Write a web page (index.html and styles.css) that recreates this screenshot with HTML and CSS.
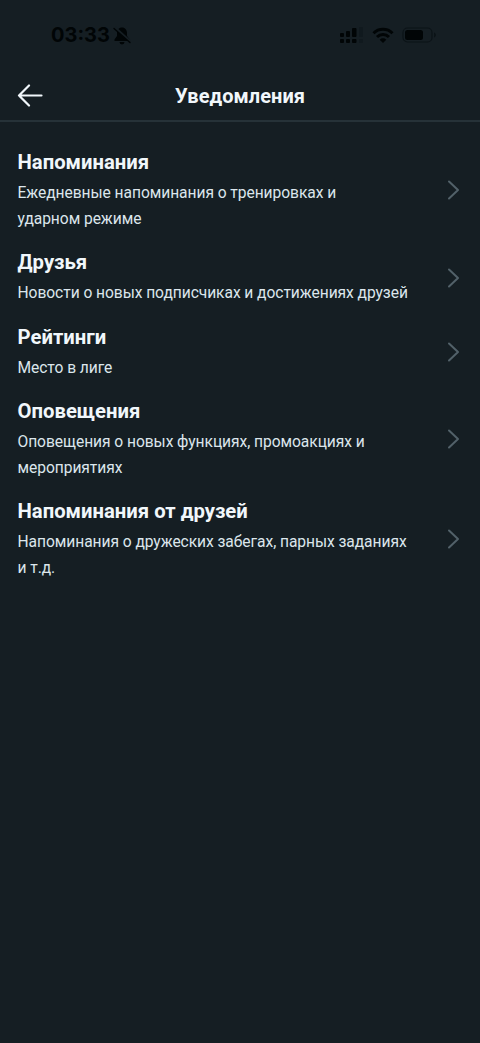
FILE: index.html
```html
<!DOCTYPE html>
<html lang="ru">
<head>
<meta charset="utf-8">
<title>Уведомления</title>
<link rel="stylesheet" href="styles.css">
</head>
<body>
<div class="status">
  <div class="clock">
    <span class="time">03:33</span>
    <svg width="18" height="19" viewBox="0 0 18 19"><path d="M9 1.500C5.800 1.500 4 4 4 7v3L1.500 13.500V15h15v-1.500L14 10V7c0-3-1.800-5.500-5-5.500zM6.500 16h5a2.500 2.500 0 0 1-5 0z" fill="#010506"/><path d="M1.800 1.500l15.500 14" stroke="#151e23" stroke-width="2.600"/><path d="M1 2.500l16 14" stroke="#010506" stroke-width="1.300" stroke-linecap="round"/></svg>
  </div>
  <div class="signals">
    <svg width="25" height="18" viewBox="0 0 25 18"><g fill="#010506"><rect x="1" y="7" width="4" height="4" rx="1"/><rect x="7" y="5" width="4" height="6" rx="1"/><rect x="13" y="2" width="4.500" height="9" rx="1"/><rect x="1" y="13" width="4" height="4" rx="1"/><rect x="7" y="13" width="4" height="4" rx="1"/><rect x="13" y="13" width="4.500" height="4" rx="1"/></g><g fill="#10191e"><rect x="20" y="1" width="4" height="10" rx="1"/><rect x="20" y="13" width="4" height="4" rx="1"/></g></svg>
    <svg width="22" height="17" viewBox="0 0 22 17"><g fill="none" stroke="#010506" stroke-width="3"><path d="M1.500 6.200a13.500 13.500 0 0 1 19 0"/><path d="M5 10a8.500 8.500 0 0 1 12 0"/></g><path d="M11 16l-3.300-3.300a4.700 4.700 0 0 1 6.600 0z" fill="#010506"/></svg>
    <svg width="35" height="18" viewBox="0 0 35 18"><rect x="1" y="2" width="29" height="14" rx="4.500" fill="none" stroke="#0b1317" stroke-width="1.200"/><rect x="3" y="4" width="18" height="10" rx="2.500" fill="#010506"/><path d="M32 6.500c2.500 1 2.500 4 0 5z" fill="#0b1317"/></svg>
  </div>
</div>
<header class="header">
  <svg class="back" width="26" height="24" viewBox="0 0 26 24"><path d="M12 1.500L2 11.500l10 10M2 11.500h22.500" fill="none" stroke="#f1f7fb" stroke-width="2.200" stroke-linecap="round" stroke-linejoin="round"/></svg>
  <h1 class="title">Уведомления</h1>
</header>
<main class="list">
  <a class="row"><div class="copy"><h2 class="name">Напоминания</h2><p class="text">Ежедневные напоминания о тренировках и<br>ударном режиме</p></div><svg class="chevron" width="13" height="20" viewBox="0 0 13 20"><path d="M2 1.500l9 8.500-9 8.500"/></svg></a>
  <a class="row"><div class="copy"><h2 class="name">Друзья</h2><p class="text">Новости о новых подписчиках и достижениях друзей</p></div><svg class="chevron" width="13" height="20" viewBox="0 0 13 20"><path d="M2 1.500l9 8.500-9 8.500"/></svg></a>
  <a class="row"><div class="copy"><h2 class="name">Рейтинги</h2><p class="text">Место в лиге</p></div><svg class="chevron" width="13" height="20" viewBox="0 0 13 20"><path d="M2 1.500l9 8.500-9 8.500"/></svg></a>
  <a class="row"><div class="copy"><h2 class="name">Оповещения</h2><p class="text">Оповещения о новых функциях, промоакциях и<br>мероприятиях</p></div><svg class="chevron" width="13" height="20" viewBox="0 0 13 20"><path d="M2 1.500l9 8.500-9 8.500"/></svg></a>
  <a class="row"><div class="copy"><h2 class="name">Напоминания от друзей</h2><p class="text">Напоминания о дружеских забегах, парных заданиях<br>и т.д.</p></div><svg class="chevron" width="13" height="20" viewBox="0 0 13 20"><path d="M2 1.500l9 8.500-9 8.500"/></svg></a>
</main>
</body>
</html>
```
FILE: styles.css
```css
* { box-sizing: border-box; }
body { margin: 0; min-height: 100vh; background: #151e23; color: #f1f7fb; font-family: Roboto, sans-serif; }
svg { display: block; flex: none; }
h1, h2, p { margin: 0; }
.status { display: flex; justify-content: space-between; align-items: center; height: 70px; padding: 0 43px 0 51px; }
.clock { display: flex; align-items: center; gap: 3px; color: #010506; }
.time { font: 700 20px/24px Inter, sans-serif; }
.signals { display: flex; align-items: center; gap: 8px; }
.header { display: grid; grid-template-columns: 26px 1fr 26px; align-items: center; height: 52px; padding: 1px 17px 0; border-bottom: 2px solid #263238; }
.title { font-size: 20px; line-height: 28px; font-weight: 700; letter-spacing: 0.05px; text-align: center; }
.list { padding-top: 18px; }
.row { display: flex; align-items: center; justify-content: space-between; padding: 8px 20px 8px 17.500px; }
.copy { display: flex; flex-direction: column; gap: 4px; }
.name { font-size: 20.3px; line-height: 28px; font-weight: 700; }
.text { font-size: 15.6px; line-height: 26.2px; letter-spacing: -0.06px; color: #dce6ec; white-space: nowrap; }
.chevron { fill: none; stroke: #526169; stroke-width: 2; stroke-linecap: round; stroke-linejoin: round; }
```
